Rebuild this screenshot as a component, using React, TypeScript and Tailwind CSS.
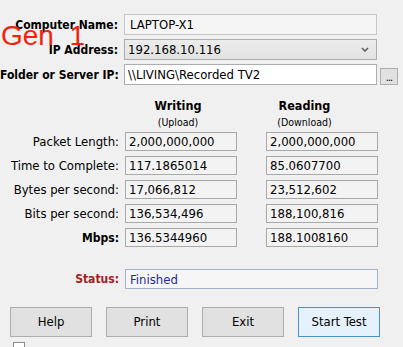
import React from 'react';

const stats = [
  { label: 'Packet Length:', up: '2,000,000,000', down: '2,000,000,000' },
  { label: 'Time to Complete:', up: '117.1865014', down: '85.0607700' },
  { label: 'Bytes per second:', up: '17,066,812', down: '23,512,602' },
  { label: 'Bits per second:', up: '136,534,496', down: '188,100,816' },
  { label: 'Mbps:', up: '136.5344960', down: '188.1008160', bold: true },
];

function FormRow({ label, children }: { label: string; children: React.ReactNode }) {
  return (
    <div className="flex items-center h-[21px]">
      <div className="w-[118px] text-right font-bold text-[12px] leading-none whitespace-nowrap">{label}</div>
      <div className="ml-[6px] flex items-center h-full">{children}</div>
    </div>
  );
}

function StatBox({ value }: { value: string }) {
  return (
    <div className="w-[112px] h-[19px] border border-[#a9a9a9] bg-[#f3f3f3] flex items-center pl-[3px] text-[13px] leading-none">
      {value}
    </div>
  );
}

function Btn({ label, primary }: { label: string; primary?: boolean }) {
  return (
    <button
      className={
        primary
          ? 'w-[82px] h-[30px] border border-[#4a90c8] bg-[#e5f1fb] text-[13px]'
          : 'w-[82px] h-[30px] border border-[#adadad] bg-[#e1e1e1] text-[13px]'
      }
    >
      {label}
    </button>
  );
}

export default function App() {
  return (
    <div className="relative w-[403px] h-[347px] overflow-hidden bg-[#f0f0f0] text-black font-['DejaVu_Sans_Condensed','Liberation_Sans',sans-serif]">
      {/* Top form */}
      <div className="flex flex-col gap-[4px] pt-[14px]">
        <FormRow label="Computer Name:">
          <div className="w-[253px] h-[21px] border border-[#c6c6c6] bg-[#f5f5f5] flex items-center pl-[5px] text-[13px] leading-none">
            LAPTOP-X1
          </div>
        </FormRow>
        <FormRow label="IP Address:">
          <div className="w-[253px] h-[21px] border border-[#acacac] bg-[linear-gradient(#ececec,#e2e2e2)] flex items-center justify-between pl-[3px] pr-[7px] text-[13px] leading-none">
            <span>192.168.10.116</span>
            <svg width="8" height="5" viewBox="0 0 8 5" fill="none">
              <path d="M1 1l3 3 3-3" stroke="#606060" strokeWidth="1.6" />
            </svg>
          </div>
        </FormRow>
        <FormRow label="Folder or Server IP:">
          <div className="w-[253px] h-[21px] border border-[#abadb3] bg-white flex items-center pl-[3px] text-[13px] leading-none">
            \\LIVING\Recorded TV2
          </div>
          <div className="ml-[3px] mt-[3px] w-[18px] h-[17px] border border-[#adadad] bg-[#e1e1e1] flex items-end justify-center text-[11px] leading-[12px] tracking-[-1px]">
            ...
          </div>
        </FormRow>
      </div>

      {/* Stats */}
      <div className="mt-[13px] grid grid-cols-[119px_112px_112px]">
        <div />
        <div className="ml-[6px] flex flex-col items-center">
          <div className="font-bold text-[12.5px] leading-[15px]">Writing</div>
          <div className="mt-[2px] text-[10.5px] leading-[14px]">(Upload)</div>
        </div>
        <div className="ml-[35px] flex flex-col items-center">
          <div className="font-bold text-[12.5px] leading-[15px]">Reading</div>
          <div className="mt-[2px] text-[10.5px] leading-[14px]">(Download)</div>
        </div>
      </div>
      <div className="mt-[3px] flex flex-col gap-[5px]">
        {stats.map((s) => (
          <div key={s.label} className="flex items-center h-[19px]">
            <div
              className={
                s.bold
                  ? 'w-[119px] text-right font-bold text-[12px] leading-none whitespace-nowrap'
                  : 'w-[119px] text-right text-[13px] leading-none whitespace-nowrap'
              }
            >
              {s.label}
            </div>
            <div className="ml-[6px]">
              <StatBox value={s.up} />
            </div>
            <div className="ml-[29px]">
              <StatBox value={s.down} />
            </div>
          </div>
        ))}
      </div>

      {/* Status */}
      <div className="mt-[22px] flex items-center h-[20px]">
        <div className="w-[119px] text-right font-bold text-[12px] leading-none text-[#a3201f]">Status:</div>
        <div className="ml-[6px] w-[253px] h-[20px] border border-[#a3b3cc] bg-[#f6f6f6] flex items-center pl-[4px] text-[13px] leading-none text-[#1f2b95]">
          Finished
        </div>
      </div>

      {/* Buttons */}
      <div className="mt-[18px] ml-[10px] flex gap-[14px]">
        <Btn label="Help" />
        <Btn label="Print" />
        <Btn label="Exit" />
        <Btn label="Start Test" primary />
      </div>

      <div className="mt-[5px] ml-[13px] w-[12px] h-[12px] border border-[#8a8a8a] bg-white" />

      {/* annotation overlay */}
      <div className="absolute left-[1px] top-[22px] font-['Liberation_Sans',sans-serif] text-[28px] leading-[28px] text-[#f5200c]">
        Gen&nbsp;&nbsp;1
      </div>
    </div>
  );
}
